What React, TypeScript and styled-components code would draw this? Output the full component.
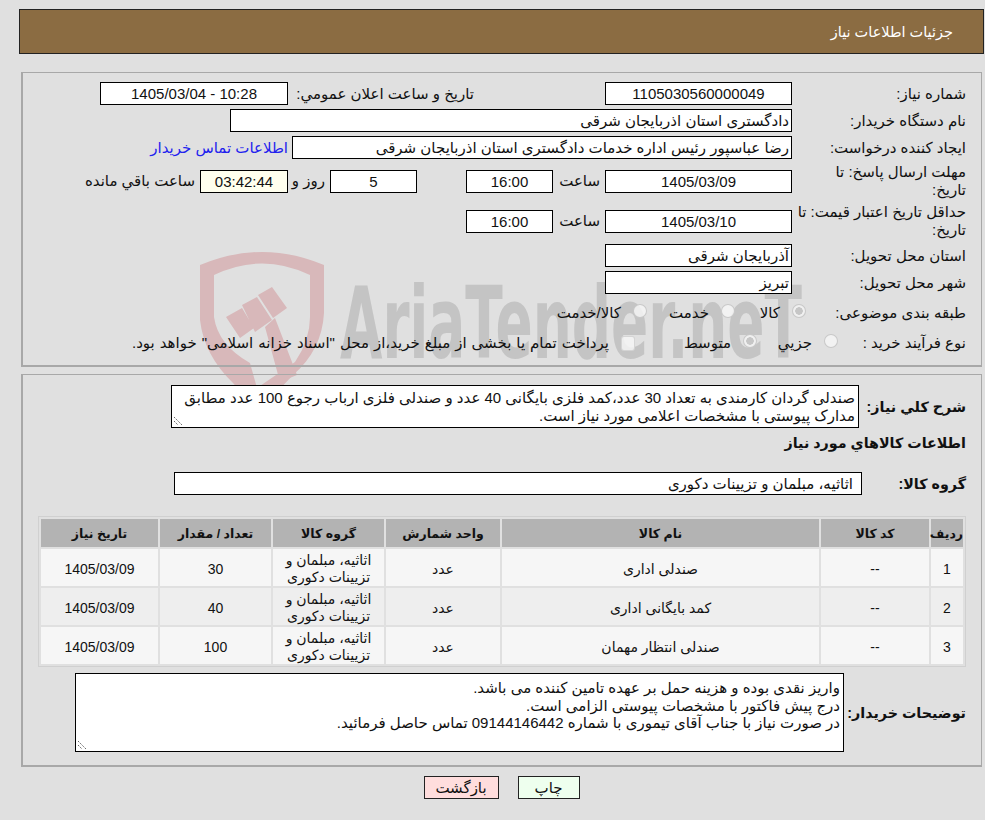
import React from 'react';
import styled, { createGlobalStyle } from 'styled-components';

const GlobalStyle = createGlobalStyle`
  html, body {
    margin: 0;
    padding: 0;
    background: #e0e0e0;
  }
  body {
    font-family: 'Liberation Sans', 'DejaVu Sans', sans-serif;
    font-size: 15px;
    color: #111;
  }
`;

const StDivPage = styled.div`
  position: relative;
  width: 985px;
  height: 820px;
  overflow: hidden;
  direction: rtl;
`;

const StSvgWatermark = styled.svg`
  position: absolute;
  left: 190px;
  top: 240px;
  width: 620px;
  height: 190px;
`;

const StDivContent = styled.div`
  position: relative;
  padding: 9px 1px 0 19px;
`;

const StDivHeader = styled.div`
  height: 43px;
  border: 1px solid #222;
  background: #8b6c42;
  color: #fff;
  display: flex;
  align-items: center;
  padding-right: 30px;
  font-size: 14.5px;
`;

const StDivPanel = styled.div<{ $height: number; $top: number }>`
  box-sizing: border-box;
  height: ${({ $height }) => $height}px;
  margin: ${({ $top }) => $top}px 2px 0 2px;
  border-style: solid;
  border-width: 1px 1px 2px 2px;
  border-color: #a8a8a8;
`;

const StDivForm = styled.div`
  display: flex;
  flex-direction: column;
  padding: 9px 15px 0 0;
`;

const StDivRow = styled.div<{ $height: number; $top?: number }>`
  display: flex;
  align-items: center;
  height: ${({ $height }) => $height}px;
  margin-top: ${({ $top }) => $top ?? 0}px;
`;

const StDivLabel = styled.div<{ $width?: number }>`
  flex: none;
  width: ${({ $width }) => $width ?? 174}px;
  line-height: 18px;
  white-space: nowrap;
`;

const StDivField = styled.div<{ $width: number; $bg?: string; $center?: boolean; $start?: number; $indent?: number }>`
  box-sizing: border-box;
  flex: none;
  width: ${({ $width }) => $width}px;
  height: 23px;
  margin-right: ${({ $start }) => $start ?? 0}px;
  border: 1px solid #000;
  background: ${({ $bg }) => $bg ?? '#fff'};
  display: flex;
  align-items: center;
  justify-content: ${({ $center }) => ($center ? 'center' : 'flex-start')};
  padding: 0 ${({ $indent }) => $indent ?? 2}px 0 2px;
  white-space: nowrap;
  overflow: hidden;
`;

const StSpanInline = styled.span<{ $width?: number; $pad?: number; $wordGap?: number }>`
  box-sizing: border-box;
  flex: none;
  width: ${({ $width }) => ($width ? `${$width}px` : 'auto')};
  padding-right: ${({ $pad }) => $pad ?? 5}px;
  word-spacing: ${({ $wordGap }) => $wordGap ?? 0}px;
  white-space: nowrap;
`;

const StALink = styled.a`
  color: #2222ee;
  margin-right: 4px;
  white-space: nowrap;
`;

const StDivOption = styled.div<{ $width: number }>`
  display: flex;
  align-items: center;
  flex: none;
  width: ${({ $width }) => $width}px;
  gap: 12px;
`;

const StSpanRadio = styled.span<{ $checked?: boolean }>`
  box-sizing: border-box;
  width: 14px;
  height: 14px;
  flex: none;
  margin-top: -4px;
  border-radius: 50%;
  border: 1.5px solid rgba(190, 190, 190, 0.8);
  background: ${({ $checked }) =>
    $checked
      ? 'radial-gradient(circle, #c6c6c6 0 3.5px, #f0f0f0 4px)'
      : 'rgba(245, 245, 245, 0.85)'};
`;

const StSpanCheck = styled.span`
  box-sizing: border-box;
  width: 14px;
  height: 15px;
  flex: none;
  margin-left: 7px;
  border-radius: 3px;
  border: 1.5px solid rgba(205, 205, 205, 0.8);
  background: rgba(245, 245, 245, 0.85);
`;

const StDivDescRow = styled.div<{ $top: number }>`
  display: flex;
  align-items: center;
  padding-right: 15px;
  margin-top: ${({ $top }) => $top}px;
`;

const StDivBoldLabel = styled.div<{ $width: number }>`
  flex: none;
  width: ${({ $width }) => $width}px;
  font-weight: bold;
  font-size: 14.3px;
  white-space: nowrap;
`;

const StDivTextBox = styled.div<{ $width: number; $height: number; $pad: number; $line: number }>`
  position: relative;
  box-sizing: border-box;
  flex: none;
  width: ${({ $width }) => $width}px;
  height: ${({ $height }) => $height}px;
  border: 1px solid #000;
  background: #fff;
  padding: ${({ $pad }) => $pad}px 3px 0;
  line-height: ${({ $line }) => $line}px;
  white-space: nowrap;
`;

const StSvgGrip = styled.svg`
  position: absolute;
  left: 1px;
  bottom: 1px;
  width: 10px;
  height: 10px;
`;

const StTableGoods = styled.table`
  width: 928px;
  margin: 21px 15px 0 0;
  border-collapse: separate;
  border-spacing: 2px;
  border: 1px solid #d0d0d0;
  table-layout: fixed;
  text-align: center;
  font-size: 14px;
`;

const StThCell = styled.th<{ $width: number }>`
  width: ${({ $width }) => $width}px;
  height: 28px;
  padding: 0;
  background: #b3b3b3;
  font-size: 12.5px;
`;

const StTdCell = styled.td<{ $even: boolean }>`
  box-sizing: border-box;
  height: 37px;
  padding: 3px 0 0;
  line-height: 17px;
  background: ${({ $even }) => ($even ? '#eeeeee' : '#f6f6f6')};
`;

const StDivButtons = styled.div`
  display: flex;
  justify-content: center;
  gap: 19px;
  padding: 9px 0 0 0;
`;

const StButtonAction = styled.button<{ $bg: string; $width: number }>`
  box-sizing: border-box;
  width: ${({ $width }) => $width}px;
  height: 23px;
  border: 1px solid #222;
  background: ${({ $bg }) => $bg};
  font: inherit;
  color: #111;
  padding: 0;
`;

const Grip: React.FC = () => (
  <StSvgGrip viewBox="0 0 10 10">
    <path d="M1 1L9 9M1 5L5 9" stroke="#666" strokeWidth="1" strokeDasharray="1.5 1" fill="none" />
  </StSvgGrip>
);

const Watermark: React.FC = () => (
  <StSvgWatermark viewBox="0 0 620 190">
    <path
      d="M10 25Q72 -1 134 25V73Q132 110 103 135L68 172L43 143Q14 115 10 80Z M24 35V77Q28 105 60 123L67 148L105 122Q120 100 120 77V35Q72 12 24 35Z"
      fill="#d8b8ba"
      fillRule="evenodd"
    />
    <path
      d="M36 77L52 68L64 88L50 98Z M52 65L67 57L82 80L65 92Z M68 55L82 47L97 68L83 78Z M75 87L85 78L107 135L90 142Z"
      fill="#d8b8ba"
    />
    <text
      x="150"
      y="118"
      textLength="462"
      lengthAdjust="spacingAndGlyphs"
      fontFamily="'DejaVu Sans', sans-serif"
      fontWeight="bold"
      fontSize="100"
      fill="#c4c4c4"
      direction="ltr"
    >
      AriaTender.neT
    </text>
  </StSvgWatermark>
);

const rows = [
  { id: '1', name: 'صندلی اداری', qty: '30' },
  { id: '2', name: 'کمد بایگانی اداری', qty: '40' },
  { id: '3', name: 'صندلی انتظار مهمان', qty: '100' },
];

const App: React.FC = () => {
  return (
    <StDivPage>
      <GlobalStyle />
      <Watermark />
      <StDivContent>
        <StDivHeader>جزئیات اطلاعات نیاز</StDivHeader>

        <StDivPanel $height={295} $top={18}>
          <StDivForm>
            <StDivRow $height={23}>
              <StDivLabel>شماره نیاز:</StDivLabel>
              <StDivField $width={187} $center>1105030560000049</StDivField>
              <StSpanInline $width={317} $pad={131}>تاریخ و ساعت اعلان عمومي:</StSpanInline>
              <StDivField $width={188} $center>10:28 - 1405/03/04</StDivField>
            </StDivRow>
            <StDivRow $height={23} $top={4}>
              <StDivLabel>نام دستگاه خریدار:</StDivLabel>
              <StDivField $width={562}>دادگستری استان اذربایجان شرقی</StDivField>
            </StDivRow>
            <StDivRow $height={23} $top={4}>
              <StDivLabel>ایجاد کننده درخواست:</StDivLabel>
              <StDivField $width={500}>رضا عباسپور رئیس اداره خدمات دادگستری استان اذربایجان شرقی</StDivField>
              <StALink>اطلاعات تماس خریدار</StALink>
            </StDivRow>
            <StDivRow $height={38} $top={3}>
              <StDivLabel>مهلت ارسال پاسخ: تا<br />تاریخ:</StDivLabel>
              <StDivField $width={187} $center>1405/03/09</StDivField>
              <StSpanInline $width={52}>ساعت</StSpanInline>
              <StDivField $width={87} $center>16:00</StDivField>
              <StDivField $width={87} $center $start={49}>5</StDivField>
              <StSpanInline $width={42}>روز و</StSpanInline>
              <StDivField $width={88} $bg="#ffffee" $center>03:42:44</StDivField>
              <StSpanInline>ساعت باقي مانده</StSpanInline>
            </StDivRow>
            <StDivRow $height={38} $top={2}>
              <StDivLabel>حداقل تاریخ اعتبار قیمت: تا<br />تاریخ:</StDivLabel>
              <StDivField $width={187} $center>1405/03/10</StDivField>
              <StSpanInline $width={52}>ساعت</StSpanInline>
              <StDivField $width={87} $center>16:00</StDivField>
            </StDivRow>
            <StDivRow $height={23} $top={4}>
              <StDivLabel>استان محل تحویل:</StDivLabel>
              <StDivField $width={187}>آذربایجان شرقی</StDivField>
            </StDivRow>
            <StDivRow $height={23} $top={4}>
              <StDivLabel>شهر محل تحویل:</StDivLabel>
              <StDivField $width={187}>تبریز</StDivField>
            </StDivRow>
            <StDivRow $height={28} $top={5}>
              <StDivLabel $width={160}>طبقه بندی موضوعی:</StDivLabel>
              <StDivOption $width={71}><StSpanRadio $checked />کالا</StDivOption>
              <StDivOption $width={88}><StSpanRadio />خدمت</StDivOption>
              <StDivOption $width={110}><StSpanRadio />کالا/خدمت</StDivOption>
            </StDivRow>
            <StDivRow $height={28} $top={2}>
              <StDivLabel $width={128}>نوع فرآیند خرید :</StDivLabel>
              <StDivOption $width={81}><StSpanRadio />جزیي</StDivOption>
              <StDivOption $width={122}><StSpanRadio $checked />متوسط</StDivOption>
              <StSpanCheck />
              <StSpanInline $wordGap={0.8}>پرداخت تمام یا بخشی از مبلغ خرید،از محل "اسناد خزانه اسلامی" خواهد بود.</StSpanInline>
            </StDivRow>
          </StDivForm>
        </StDivPanel>

        <StDivPanel $height={393} $top={7}>
          <StDivDescRow $top={10}>
            <StDivBoldLabel $width={107}>شرح كلي نياز:</StDivBoldLabel>
            <StDivTextBox $width={688} $height={43} $pad={3} $line={18}>
              صندلی گردان کارمندی به تعداد 30 عدد،کمد فلزی بایگانی 40 عدد و صندلی فلزی ارباب رجوع 100 عدد مطابق
              <br />
              مدارک پیوستی با مشخصات اعلامی مورد نیاز است.
              <Grip />
            </StDivTextBox>
          </StDivDescRow>
          <StDivDescRow $top={7}>
            <StDivBoldLabel $width={300}>اطلاعات كالاهاي مورد نياز</StDivBoldLabel>
          </StDivDescRow>
          <StDivDescRow $top={21}>
            <StDivBoldLabel $width={104}>گروه کالا:</StDivBoldLabel>
            <StDivField $width={688} $indent={8}>اثاثیه، مبلمان و تزیینات دکوری</StDivField>
          </StDivDescRow>
          <StTableGoods>
            <thead>
              <tr>
                <StThCell $width={32}>ردیف</StThCell>
                <StThCell $width={108}>کد کالا</StThCell>
                <StThCell $width={317}>نام کالا</StThCell>
                <StThCell $width={114}>واحد شمارش</StThCell>
                <StThCell $width={111}>گروه کالا</StThCell>
                <StThCell $width={111}>تعداد / مقدار</StThCell>
                <StThCell $width={117}>تاریخ نیاز</StThCell>
              </tr>
            </thead>
            <tbody>
              {rows.map((row, index) => {
                const even = index % 2 === 1;
                return (
                  <tr key={row.id}>
                    <StTdCell $even={even}>{row.id}</StTdCell>
                    <StTdCell $even={even}>--</StTdCell>
                    <StTdCell $even={even}>{row.name}</StTdCell>
                    <StTdCell $even={even}>عدد</StTdCell>
                    <StTdCell $even={even}>اثاثیه، مبلمان و تزیینات دکوری</StTdCell>
                    <StTdCell $even={even}>{row.qty}</StTdCell>
                    <StTdCell $even={even}>1405/03/09</StTdCell>
                  </tr>
                );
              })}
            </tbody>
          </StTableGoods>
          <StDivDescRow $top={6}>
            <StDivBoldLabel $width={122}>توضیحات خریدار:</StDivBoldLabel>
            <StDivTextBox $width={769} $height={79} $pad={5} $line={17.5}>
              واریز نقدی بوده و هزینه حمل بر عهده تامین کننده می باشد.
              <br />
              درج پیش فاکتور با مشخصات پیوستی الزامی است.
              <br />
              در صورت نیاز با جناب آقای تیموری با شماره 09144146442 تماس حاصل فرمائید.
              <Grip />
            </StDivTextBox>
          </StDivDescRow>
        </StDivPanel>

        <StDivButtons>
          <StButtonAction $bg="#eeffee" $width={62}>چاپ</StButtonAction>
          <StButtonAction $bg="#ffdddd" $width={75}>بازگشت</StButtonAction>
        </StDivButtons>
      </StDivContent>
    </StDivPage>
  );
};

export default App;
